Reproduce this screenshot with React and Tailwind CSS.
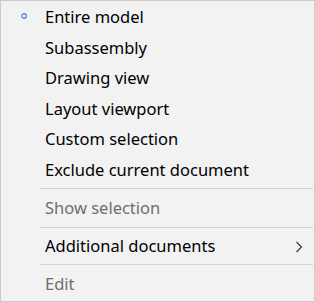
const items = [
  { label: "Entire model", checked: true },
  { label: "Subassembly" },
  { label: "Drawing view" },
  { label: "Layout viewport" },
  { label: "Custom selection" },
  { label: "Exclude current document" },
];

function Bullet() {
  return (
    <svg width="6" height="6" viewBox="0 0 6 6" className="absolute left-[20px] top-[11px]">
      <circle cx="3" cy="3" r="2.3" fill="none" stroke="#4a7fd6" strokeWidth="1.2" />
    </svg>
  );
}

function Item({ label, checked, disabled, submenu, h = "h-[30px]" }) {
  return (
    <div className={`relative flex items-center pl-[44px] ${h}`}>
      {checked && <Bullet />}
      <span className={disabled ? "text-[#6e6e6e]" : "text-black"}>{label}</span>
      {submenu && (
        <svg width="8" height="12" viewBox="0 0 8 12" className="absolute left-[294px] top-[10px]">
          <path d="M1.5 1 L6.5 6 L1.5 11" fill="none" stroke="#333" strokeWidth="1.1" />
        </svg>
      )}
    </div>
  );
}

export default function App() {
  return (
    <div
      className="w-[315px] h-[302px] border border-[#cccccc] bg-[#f2f2f2] pt-[1px] text-[16.5px] leading-none"
      style={{ fontFamily: '"Noto Sans", "Open Sans", sans-serif' }}
    >
      {items.map((item) => (
        <Item key={item.label} {...item} h="h-[30.5px]" />
      ))}
      <div className="ml-[39px] mr-[1px] mt-[3px] mb-[4px] h-px bg-[#d5d5d5]" />
      <Item label="Show selection" disabled />
      <div className="ml-[39px] mr-[1px] mt-[4px] mb-[3px] h-px bg-[#d5d5d5]" />
      <Item label="Additional documents" submenu />
      <div className="ml-[39px] mr-[1px] mt-[3px] mb-[4px] h-px bg-[#d5d5d5]" />
      <Item label="Edit" disabled />
    </div>
  );
}
